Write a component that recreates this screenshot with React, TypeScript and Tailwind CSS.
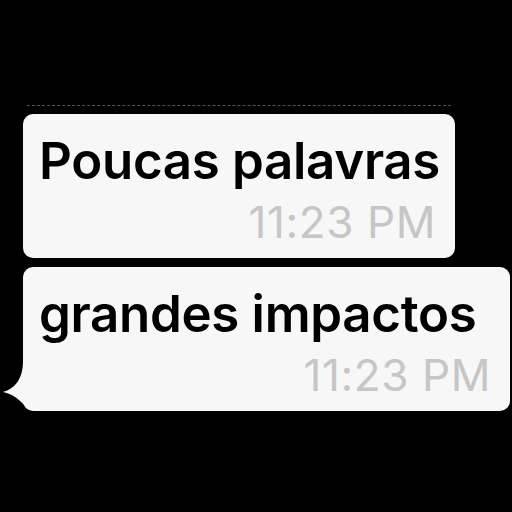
const Bubble = ({
  text,
  time,
  width,
  tail,
  className,
}: {
  text: string;
  time: string;
  width: string;
  tail?: boolean;
  className?: string;
}) => {
  return (
    <div className={`relative ${width} ${className ?? ""}`}>
      <div className="flex flex-col rounded-[10px] bg-[#f7f7f7] pl-[16px] pr-[19px] pt-[17px] h-[144px]">
        <div className="whitespace-nowrap text-[51px] leading-[60px] font-semibold text-black tracking-[-0.3px]">{text}</div>
        <div className="mt-[8px] self-end whitespace-nowrap text-[44px] leading-[46px] text-[#c6c6c6] tracking-[0.6px]">{time}</div>
      </div>
      {/* rabinho do balão */}
      {tail && (
        <svg className="absolute left-[-23px] top-[93px]" width="45" height="50" viewBox="0 0 45 50">
          <path d="M23 2 C23 18 15 29 3 32 C13 34 20 40 27 48 L30 50 L45 50 L45 2 Z" fill="#f7f7f7" />
        </svg>
      )}
    </div>
  );
};

const App = () => {
  return (
    <div className="w-[512px] h-[512px] bg-black overflow-hidden font-['Inter','Liberation_Sans',sans-serif]">
      <div className="flex flex-col pl-[23px] pt-[105px]">
        {/* linha pontilhada fraca */}
        <div className="w-[424px] ml-[4px] border-t border-dashed border-[#555]" />
        <Bubble text="Poucas palavras" time="11:23 PM" width="w-[432px]" className="mt-[8px]" />
        <Bubble text="grandes impactos" time="11:23 PM" width="w-[487px]" className="mt-[9px]" tail />
      </div>
    </div>
  );
};

export default App;
